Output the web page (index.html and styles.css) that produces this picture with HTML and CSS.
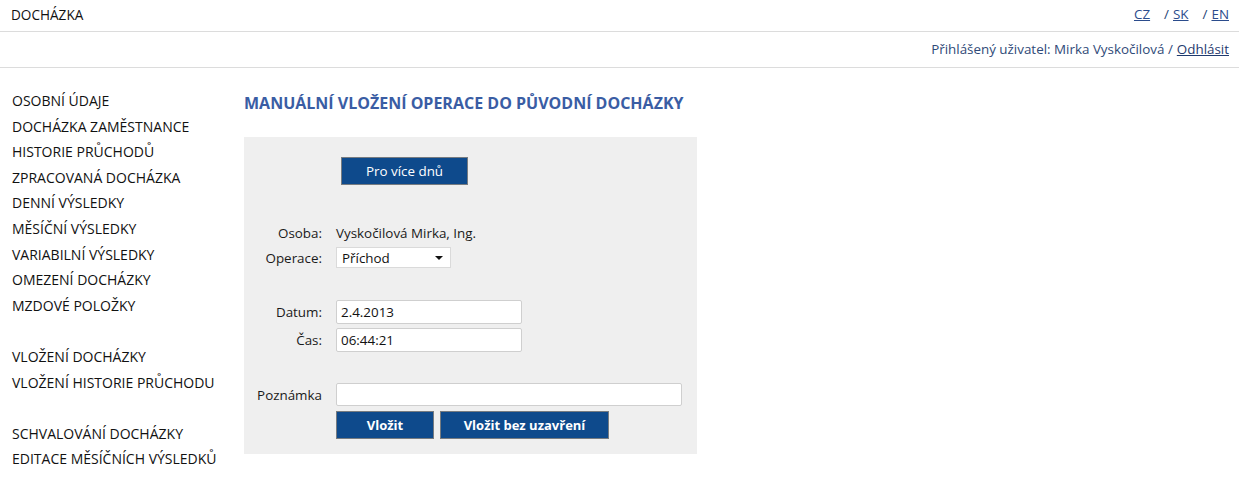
FILE: index.html
```html
<!DOCTYPE html>
<html lang="cs">
<head>
<meta charset="utf-8">
<title>Docházka</title>
<link rel="stylesheet" href="styles.css">
</head>
<body>
<header class="topbar">
  <div class="brand">DOCHÁZKA</div>
  <div class="langs"><a href="#">CZ</a><span class="sep">/</span><a href="#">SK</a><span class="sep">/</span><a href="#">EN</a></div>
</header>
<div class="userbar">Přihlášený uživatel: Mirka Vyskočilová / <a href="#">Odhlásit</a></div>
<div class="main">
  <nav class="nav">
    <a href="#">OSOBNÍ ÚDAJE</a>
    <a href="#">DOCHÁZKA ZAMĚSTNANCE</a>
    <a href="#">HISTORIE PRŮCHODŮ</a>
    <a href="#">ZPRACOVANÁ DOCHÁZKA</a>
    <a href="#">DENNÍ VÝSLEDKY</a>
    <a href="#">MĚSÍČNÍ VÝSLEDKY</a>
    <a href="#">VARIABILNÍ VÝSLEDKY</a>
    <a href="#">OMEZENÍ DOCHÁZKY</a>
    <a href="#">MZDOVÉ POLOŽKY</a>
    <span class="gap"></span>
    <a href="#">VLOŽENÍ DOCHÁZKY</a>
    <a href="#">VLOŽENÍ HISTORIE PRŮCHODU</a>
    <span class="gap"></span>
    <a href="#">SCHVALOVÁNÍ DOCHÁZKY</a>
    <a href="#">EDITACE MĚSÍČNÍCH VÝSLEDKŮ</a>
  </nav>
  <section class="content">
    <h1 class="title">MANUÁLNÍ VLOŽENÍ OPERACE DO PŮVODNÍ DOCHÁZKY</h1>
    <div class="panel">
      <div class="top-action"><button class="btn btn-multi">Pro více dnů</button></div>
      <div class="row row-osoba"><span class="label">Osoba:</span><span class="value">Vyskočilová Mirka, Ing.</span></div>
      <div class="row row-operace"><span class="label">Operace:</span>
        <div class="select"><span>Příchod</span><span class="caret"></span></div>
      </div>
      <div class="row row-datum"><span class="label">Datum:</span><div class="input input-short">2.4.2013</div></div>
      <div class="row row-cas"><span class="label">Čas:</span><div class="input input-short">06:44:21</div></div>
      <div class="row row-pozn"><span class="label">Poznámka</span><div class="input input-long"></div></div>
      <div class="row row-buttons"><span class="label"></span>
        <button class="btn btn-bold btn-vlozit">Vložit</button>
        <button class="btn btn-bold btn-bez">Vložit bez uzavření</button>
      </div>
    </div>
  </section>
</div>
</body>
</html>
```
FILE: styles.css
```css
* { box-sizing: border-box; }
body {
  margin: 0;
  font-family: "Open Sans", "Noto Sans", "Liberation Sans", sans-serif;
  font-size: 13.4px;
  color: #111;
  background: #fff;
}
a { color: inherit; text-decoration: none; }

.topbar {
  height: 32px;
  border-bottom: 1px solid #dcdcdc;
  display: flex;
  justify-content: space-between;
  align-items: center;
  padding: 0 10px 3px 11px;
}
.brand { font-size: 13.6px; color: #111; }
.langs { display: flex; align-items: center; color: #233f73; font-size: 13.4px; }
.langs a { text-decoration: underline; color: #2b4c8c; }
.langs .sep { margin: 0 4px 0 14px; }

.userbar {
  height: 36px;
  border-bottom: 1px solid #dcdcdc;
  display: flex;
  justify-content: flex-end;
  align-items: center;
  padding: 0 10px 1px 0;
  color: #2f4a78;
  font-size: 13.4px;
}
.userbar a { text-decoration: underline; color: #1f3a6e; margin-left: 4px; }

.main { display: flex; }
.nav {
  width: 244px;
  padding: 20px 0 0 12px;
  display: flex;
  flex-direction: column;
}
.nav a, .nav .gap {
  display: block;
  height: 25.6px;
  line-height: 25.6px;
  font-size: 14px;
  color: #111;
  white-space: nowrap;
}

.content { flex: 0 0 auto; }
.title {
  margin: 25px 0 0 0;
  height: 44px;
  font-size: 16px;
  font-weight: 700;
  color: #3a5da4;
  line-height: 20px;
}
.panel {
  width: 453px;
  height: 317px;
  background: #efefef;
  padding-top: 20px;
}
.top-action { padding-left: 97px; }
.btn {
  background: #0e4a8c;
  color: #fff;
  border: 1px solid #767b80;
  font-family: inherit;
  font-size: 13.4px;
  height: 28px;
  padding: 0;
  cursor: pointer;
}
.btn-multi { width: 127px; }
.btn-bold { font-weight: 700; font-size: 13px; }
.btn-vlozit { width: 98px; }
.btn-bez { width: 169px; margin-left: 6px; }

.row { display: flex; align-items: center; }
.label {
  width: 78px;
  text-align: right;
  margin-right: 14px;
  color: #1a1a1a;
  font-size: 13.4px;
}
.value { font-size: 13.4px; color: #1a1a1a; }
.row-osoba { margin-top: 39px; height: 18px; }
.row-operace { margin-top: 5px; }
.select {
  width: 115px;
  height: 21px;
  background: #fff;
  border: 1px solid #dadada;
  display: flex;
  align-items: center;
  justify-content: space-between;
  padding: 0 7px 0 5px;
  font-size: 13.4px;
}
.caret {
  width: 0; height: 0;
  border-left: 4px solid transparent;
  border-right: 4px solid transparent;
  border-top: 4px solid #111;
}
.row-datum { margin-top: 32px; }
.row-cas { margin-top: 4px; }
.row-pozn { margin-top: 31px; }
.row-buttons { margin-top: 5px; }
.input {
  height: 24px;
  background: #fff;
  border: 1px solid #cfcfcf;
  border-radius: 2px;
  padding: 0 4px;
  display: flex;
  align-items: center;
  font-size: 13.4px;
  color: #111;
}
.input-short { width: 186px; }
.input-long { width: 346px; height: 23px; }
```
